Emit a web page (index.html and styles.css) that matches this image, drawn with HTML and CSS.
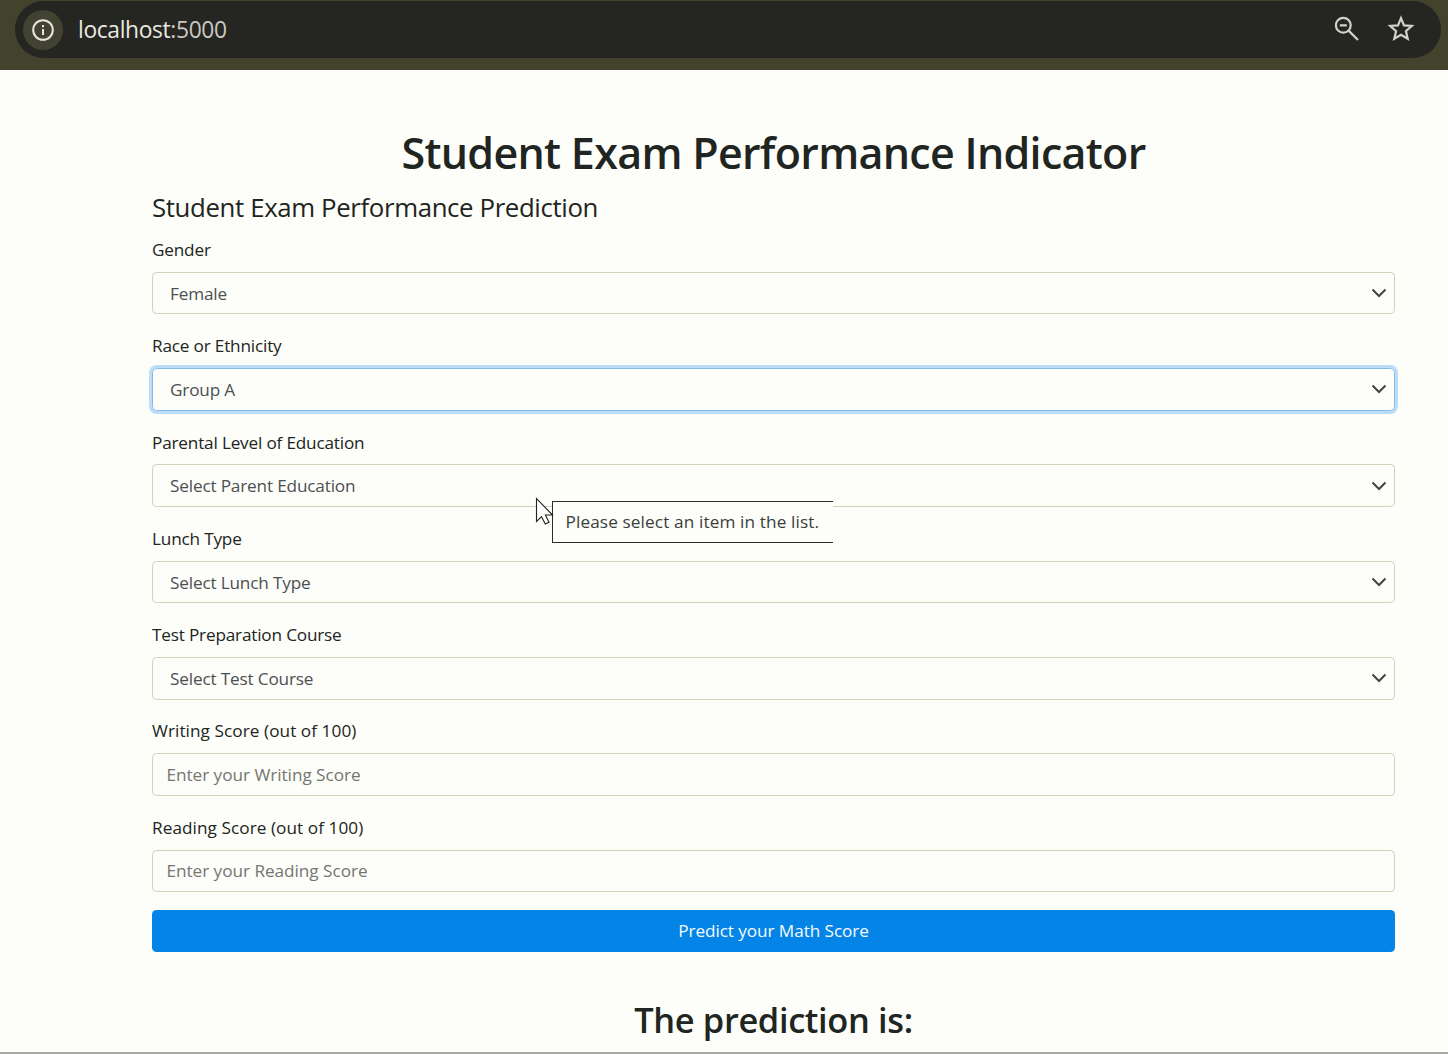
FILE: index.html
```html
<!DOCTYPE html>
<html lang="en">
<head>
<meta charset="utf-8">
<title>Student Exam Performance Indicator</title>
<link rel="stylesheet" href="styles.css">
</head>
<body>
<header class="browser-bar">
  <div class="address">
    <span class="info"><svg width="24" height="24" viewBox="0 0 24 24" fill="none" stroke="#e6e6dc" stroke-width="2"><circle cx="12" cy="12" r="9.8"/><path d="M12 11v6M12 7v2.2"/></svg></span>
    <span class="url"><span class="host">localhost</span>:5000</span>
    <svg class="lens" width="26" height="26" viewBox="0 0 26 26" fill="none" stroke="#d2d2c8" stroke-width="2.2"><circle cx="9.3" cy="9.3" r="7.4"/><path d="M5.8 9.3h7M14.6 14.6l9.4 9.4"/></svg>
    <svg class="star" width="28" height="26" viewBox="0 0 28 26" fill="none" stroke="#d2d2c8" stroke-width="2.2"><path d="M14 3.200l3 7.200 7.800.6-5.900 5.100 1.800 7.600-6.700-4-6.700 4 1.800-7.600L3.200 11l7.800-.6z"/></svg>
  </div>
</header>
<main class="page">
  <h1 class="title">Student Exam Performance Indicator</h1>
  <form class="form">
    <p class="legend">Student Exam Performance Prediction</p>
    <div class="field"><label>Gender</label><div class="control select"><span>Female</span><svg class="chevron" viewBox="0 0 16 10"><path d="M1.500 1.500L8 8l6.500-6.500"/></svg></div></div>
    <div class="field"><label>Race or Ethnicity</label><div class="control select focused"><span>Group A</span><svg class="chevron" viewBox="0 0 16 10"><path d="M1.500 1.500L8 8l6.500-6.500"/></svg></div></div>
    <div class="field"><label>Parental Level of Education</label><div class="control select"><span>Select Parent Education</span><svg class="chevron" viewBox="0 0 16 10"><path d="M1.500 1.500L8 8l6.500-6.500"/></svg></div></div>
    <div class="field"><label>Lunch Type</label><div class="control select"><span>Select Lunch Type</span><svg class="chevron" viewBox="0 0 16 10"><path d="M1.500 1.500L8 8l6.500-6.500"/></svg></div></div>
    <div class="field"><label>Test Preparation Course</label><div class="control select"><span>Select Test Course</span><svg class="chevron" viewBox="0 0 16 10"><path d="M1.500 1.500L8 8l6.500-6.500"/></svg></div></div>
    <div class="field score"><label>Writing Score (out of 100)</label><div class="control placeholder"><span>Enter your Writing Score</span></div></div>
    <div class="field score"><label>Reading Score (out of 100)</label><div class="control placeholder"><span>Enter your Reading Score</span></div></div>
    <button class="submit" type="button">Predict your Math Score</button>
  </form>
  <h2 class="result">The prediction is:</h2>
</main>
<div class="tooltip">Please select an item in the list.</div>
<svg class="cursor" width="20" height="30" viewBox="0 0 20 30"><path d="M1.500 1.500v23l5-4.800 3.800 7.300 3.700-1.800-3.600-7.200h7.100z" fill="#fff" stroke="#222" stroke-width="1.100"/></svg>
</body>
</html>
```
FILE: styles.css
```css
* { box-sizing: border-box; }
body {
  margin: 0;
  height: 1054px;
  overflow: hidden;
  position: relative;
  background: #fdfdfa;
  border-bottom: 2px solid #aaa9a5;
  color: #212521;
  font: 17.2px/26.8px "Open Sans", "Noto Sans", sans-serif;
}
.browser-bar { height: 70px; padding: 1px 7px 11px 15px; background: #43422d; }
.address { height: 57px; display: flex; align-items: center; padding: 0 26px 0 8px; border-radius: 29px; background: #252522; }
.info { width: 40px; height: 40px; border-radius: 50%; background: #424232; display: grid; place-items: center; }
.url { margin: 2px 0 0 15px; flex: 1; color: #c9c9c0; font-size: 22.8px; letter-spacing: -0.35px; }
.host { color: #e9e9e0; }
.star { margin: -3px 0 0 27px; }
.lens { margin-top: -1px; }
.page { padding: 0 53px 0 152px; }
.title { margin: 0; padding-top: 56px; font-size: 43px; line-height: 54px; font-weight: 600; letter-spacing: -0.7px; text-align: center; }
.legend { margin: 0; padding-top: 7px; height: 56px; font-size: 25.8px; line-height: 40px; letter-spacing: -0.37px; }
.field { margin-bottom: 17.9px; }
.field label { display: block; height: 27.1px; margin-bottom: 8.8px; padding-top: 1px; letter-spacing: -0.19px; }
.field.score label { letter-spacing: 0.06px; }
.control { height: 42.5px; display: flex; align-items: center; justify-content: space-between; padding: 0 7px 0 17px; border: 1px solid #d2d2b8; border-radius: 4.5px; color: #4b5052; letter-spacing: -0.17px; }
.control span { padding-top: 2px; }
.control.placeholder { padding-left: 13.5px; color: #73776f; letter-spacing: -0.04px; }
.control.focused { border-color: #84b9ea; box-shadow: 0 0 0 3px #bddcf8; }
.chevron { width: 16px; height: 10px; fill: none; stroke: #414542; stroke-width: 2; }
.submit { display: block; width: 100%; height: 42px; padding: 1px 0 0; border: 0; border-radius: 4.5px; background: #0484e6; color: #f5fbff; font: inherit; letter-spacing: -0.08px; }
.result { margin: 0; padding-top: 46px; font-size: 34.4px; line-height: 44px; font-weight: 600; letter-spacing: -0.35px; text-align: center; }
.tooltip { position: absolute; left: 552px; top: 501px; width: 281px; height: 42px; padding-left: 12.5px; line-height: 39px; letter-spacing: 0.12px; background: #fdfdfa; border: 1px solid #2c2c24; border-right: 0; color: #3b3d3b; }
.cursor { position: absolute; left: 535px; top: 497px; }
```
